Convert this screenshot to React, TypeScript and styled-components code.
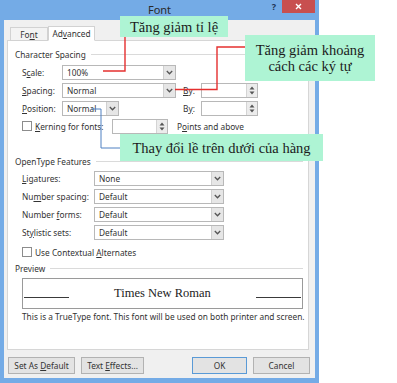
import styled, { createGlobalStyle } from 'styled-components';

const GlobalStyle = createGlobalStyle`
  html, body {
    margin: 0;
    padding: 0;
    background: #fff;
  }
  body {
    font-family: 'Noto Sans', 'Open Sans', sans-serif;
    color: #2e2e2e;
  }
`;

const FRAME = '#74abe6';

const Chevron = () => (
  <svg width="7" height="5" viewBox="0 0 7 5">
    <polyline points="0.8,1 3.5,3.8 6.2,1" fill="none" stroke="#555" strokeWidth="1.3" />
  </svg>
);

const SpinArrows = () => (
  <svg width="6" height="11" viewBox="0 0 6 11">
    <polygon points="3,1.5 5.5,4.5 0.5,4.5" fill="#555" />
    <polygon points="3,9.5 5.5,6.5 0.5,6.5" fill="#555" />
  </svg>
);

const CloseGlyph = () => (
  <svg width="7" height="7" viewBox="0 0 7 7">
    <path d="M1 1 L6 6 M6 1 L1 6" stroke="#fff" strokeWidth="1.4" />
  </svg>
);

const Combo = ({ w, value }: { w: number; value: string }) => (
  <ComboBox $w={w}>
    <ComboText>{value}</ComboText>
    <ComboArrow>
      <Chevron />
    </ComboArrow>
  </ComboBox>
);

const Spinner = ({ w }: { w: number }) => (
  <SpinBox $w={w}>
    <SpinField />
    <SpinButtons>
      <SpinArrows />
    </SpinButtons>
  </SpinBox>
);

const App = () => {
  return (
    <Page>
      <GlobalStyle />
      <Window>
        <TitleBar>
          <span />
          <Title>Font</Title>
          <TitleActions>
            <HelpButton>?</HelpButton>
            <CloseButton>
              <CloseGlyph />
            </CloseButton>
          </TitleActions>
        </TitleBar>
        <Body>
          <Tabs>
            <Tab $w={38}>
              Fo<u>n</u>t
            </Tab>
            <Tab $w={47} $active>
              Ad<u>v</u>anced
            </Tab>
          </Tabs>
          <Panel>
            <Legend>Character Spacing</Legend>
            <CharGrid>
              <Label>
                S<u>c</u>ale:
              </Label>
              <Combo w={114} value="100%" />
              <span />
              <span />
              <Label>
                <u>S</u>pacing:
              </Label>
              <Combo w={114} value="Normal" />
              <Label>
                <u>B</u>y:
              </Label>
              <Spinner w={57} />
              <Label>
                <u>P</u>osition:
              </Label>
              <Combo w={57} value="Normal" />
              <Label>
                B<u>y</u>:
              </Label>
              <Spinner w={57} />
            </CharGrid>
            <CheckRow>
              <Check />
              <Label style={{ width: 77 }}>
                <u>K</u>erning for fonts:
              </Label>
              <Spinner w={56} />
              <Label style={{ marginLeft: 9 }}>
                P<u>o</u>ints and above
              </Label>
            </CheckRow>

            <Legend $gap={20}>OpenType Features</Legend>
            <FeatureGrid>
              <Label>
                <u>L</u>igatures:
              </Label>
              <Combo w={130} value="None" />
              <Label>
                Nu<u>m</u>ber spacing:
              </Label>
              <Combo w={130} value="Default" />
              <Label>
                Number <u>f</u>orms:
              </Label>
              <Combo w={130} value="Default" />
              <Label>
                St<u>y</u>listic sets:
              </Label>
              <Combo w={130} value="Default" />
            </FeatureGrid>
            <CheckRow $gap={2}>
              <Check />
              <Label>
                Use Contextual <u>A</u>lternates
              </Label>
            </CheckRow>

            <Legend $gap={1}>Preview</Legend>
            <PreviewBox>
              <PreviewRule />
              <PreviewText>Times New Roman</PreviewText>
              <PreviewRule />
            </PreviewBox>
            <Note>This is a TrueType font. This font will be used on both printer and screen.</Note>
          </Panel>
          <ButtonRow>
            <DialogButton $w={67}>
              Set As <u>D</u>efault
            </DialogButton>
            <DialogButton $w={63}>
              Text <u>E</u>ffects...
            </DialogButton>
            <Spacer />
            <DialogButton $w={55} $primary>
              OK
            </DialogButton>
            <DialogButton $w={57}>Cancel</DialogButton>
          </ButtonRow>
        </Body>
      </Window>

      <Connectors width="397" height="383" viewBox="0 0 397 383">
        <polyline points="103,71 125,71 125,37" fill="none" stroke="#e5302f" strokeWidth="1.4" />
        <polyline points="175,89.5 217,89.5 217,47 245,47" fill="none" stroke="#e5302f" strokeWidth="1.4" />
        <polyline points="91,109 101,109 101,148 120,148" fill="none" stroke="#4f80c2" strokeWidth="1" />
      </Connectors>

      <Callout $x={120} $y={16} $w={108} $h={21}>
        Tăng giảm tỉ lệ
      </Callout>
      <Callout $x={245} $y={35} $w={130} $h={46}>
        Tăng giảm khoảng
        <br />
        cách các ký tự
      </Callout>
      <Callout $x={120} $y={134} $w={203} $h={27}>
        Thay đổi lề trên dưới của hàng
      </Callout>
    </Page>
  );
};

export default App;

const Page = styled.div`
  position: relative;
  width: 397px;
  height: 383px;
  overflow: hidden;
  background: #fff;
`;

const Window = styled.div`
  width: 319px;
  height: 383px;
  box-sizing: border-box;
  padding: 0 4px 5px 4px;
  background: ${FRAME};
  display: flex;
  flex-direction: column;
`;

const TitleBar = styled.div`
  height: 20px;
  display: grid;
  grid-template-columns: 1fr auto 1fr;
  align-items: start;
`;

const Title = styled.div`
  font-size: 11px;
  line-height: 19px;
  color: #2a2a2a;
`;

const TitleActions = styled.div`
  justify-self: end;
  display: flex;
  align-items: flex-start;
`;

const HelpButton = styled.span`
  width: 16px;
  font-size: 9px;
  font-weight: bold;
  line-height: 13px;
  color: #1e3556;
  text-align: center;
`;

const CloseButton = styled.span`
  width: 33px;
  height: 13px;
  background: #c84f4f;
  display: flex;
  align-items: center;
  justify-content: center;
`;

const Body = styled.div`
  flex: 1;
  background: #f0f0f0;
  display: flex;
  flex-direction: column;
  padding: 6px 6px 0 3px;
  min-height: 0;
`;

const Tabs = styled.div`
  display: flex;
  align-items: flex-end;
  height: 15px;
  margin: 0 0 -1px 3px;
  position: relative;
  z-index: 1;
`;

const Tab = styled.div<{ $w: number; $active?: boolean }>`
  width: ${p => p.$w}px;
  height: ${p => (p.$active ? 15 : 14)}px;
  box-sizing: border-box;
  border: 1px solid #d2d2d2;
  border-bottom-color: ${p => (p.$active ? '#fff' : '#d2d2d2')};
  background: ${p => (p.$active ? '#fff' : '#f3f3f3')};
  font-size: 8.3px;
  line-height: 13px;
  text-align: center;
  color: #333;
`;

const Panel = styled.div`
  flex: 1;
  background: #fff;
  border: 1px solid #d6d6d6;
  padding: 7px 5px 0 7px;
  display: flex;
  flex-direction: column;
`;

const Legend = styled.div<{ $gap?: number }>`
  display: flex;
  align-items: center;
  height: 12px;
  margin-top: ${p => p.$gap ?? 0}px;
  font-size: 8.3px;
  color: #333;
  white-space: nowrap;

  &::after {
    content: '';
    flex: 1;
    margin-left: 5px;
    border-top: 1px solid #dadada;
  }
`;

const Label = styled.span`
  font-size: 8.3px;
  color: #333;
  white-space: nowrap;
`;

const CharGrid = styled.div`
  margin-top: 3px;
  padding-left: 7px;
  display: grid;
  grid-template-columns: 40px 121px 18px 57px;
  grid-auto-rows: 18px;
  align-items: center;
`;

const FeatureGrid = styled.div`
  margin-top: 2px;
  padding-left: 7px;
  display: grid;
  grid-template-columns: 72px 130px;
  grid-auto-rows: 18px;
  align-items: center;
`;

const CheckRow = styled.div<{ $gap?: number }>`
  height: 18px;
  margin-top: ${p => p.$gap ?? 0}px;
  padding-left: 7px;
  display: flex;
  align-items: center;
`;

const Check = styled.span`
  width: 10px;
  height: 10px;
  box-sizing: border-box;
  border: 1px solid #8c8c8c;
  background: #fff;
  margin-right: 3px;
`;

const ComboBox = styled.div<{ $w: number }>`
  width: ${p => p.$w}px;
  height: 15px;
  box-sizing: border-box;
  border: 1px solid #b8b8b8;
  background: #fff;
  display: flex;
  align-items: stretch;
`;

const ComboText = styled.span`
  flex: 1;
  padding-left: 4px;
  font-size: 8.3px;
  line-height: 13px;
  color: #333;
`;

const ComboArrow = styled.span`
  width: 11px;
  background: #e6e6e6;
  border-left: 1px solid #d0d0d0;
  display: flex;
  align-items: center;
  justify-content: center;
`;

const SpinBox = styled.div<{ $w: number }>`
  width: ${p => p.$w}px;
  height: 15px;
  box-sizing: border-box;
  border: 1px solid #b8b8b8;
  background: #fff;
  display: flex;
`;

const SpinField = styled.span`
  flex: 1;
`;

const SpinButtons = styled.span`
  width: 10px;
  background: #ececec;
  border-left: 1px solid #d4d4d4;
  display: flex;
  align-items: center;
  justify-content: center;
`;

const PreviewBox = styled.div`
  margin: 4px 0 0 7px;
  height: 31px;
  box-sizing: border-box;
  border: 1px solid #9a9a9a;
  display: flex;
  align-items: center;
  padding: 0 1px;
`;

const PreviewRule = styled.span`
  width: 45px;
  align-self: flex-end;
  margin-bottom: 10px;
  border-top: 1px solid #3a3a3a;
`;

const PreviewText = styled.span`
  flex: 1;
  text-align: center;
  font-family: 'Liberation Serif', 'Times New Roman', serif;
  font-size: 12.5px;
  color: #222;
`;

const Note = styled.div`
  margin: 3px 0 0 7px;
  font-size: 8.3px;
  line-height: 10px;
  color: #333;
  white-space: nowrap;
`;

const ButtonRow = styled.div`
  display: flex;
  gap: 7px;
  padding: 7px 0 4px 1px;
  margin-right: -1px;
`;

const Spacer = styled.span`
  flex: 1;
`;

const DialogButton = styled.div<{ $w: number; $primary?: boolean }>`
  width: ${p => p.$w}px;
  height: 17px;
  box-sizing: border-box;
  border: 1px solid ${p => (p.$primary ? '#5a9ad6' : '#b2b2b2')};
  background: #e3e3e3;
  font-size: 8.3px;
  line-height: 15px;
  text-align: center;
  color: #333;
  white-space: nowrap;
  & + & {
    margin-left: -1px;
  }
`;

const Connectors = styled.svg`
  position: absolute;
  left: 0;
  top: 0;
  pointer-events: none;
`;

const Callout = styled.div<{ $x: number; $y: number; $w: number; $h: number }>`
  position: absolute;
  left: ${p => p.$x}px;
  top: ${p => p.$y}px;
  width: ${p => p.$w}px;
  height: ${p => p.$h}px;
  background: #aef4d4;
  display: flex;
  align-items: center;
  justify-content: center;
  text-align: center;
  font-family: 'Liberation Serif', 'Times New Roman', serif;
  font-size: 14.5px;
  line-height: 16px;
  color: #1c1c1c;
`;
